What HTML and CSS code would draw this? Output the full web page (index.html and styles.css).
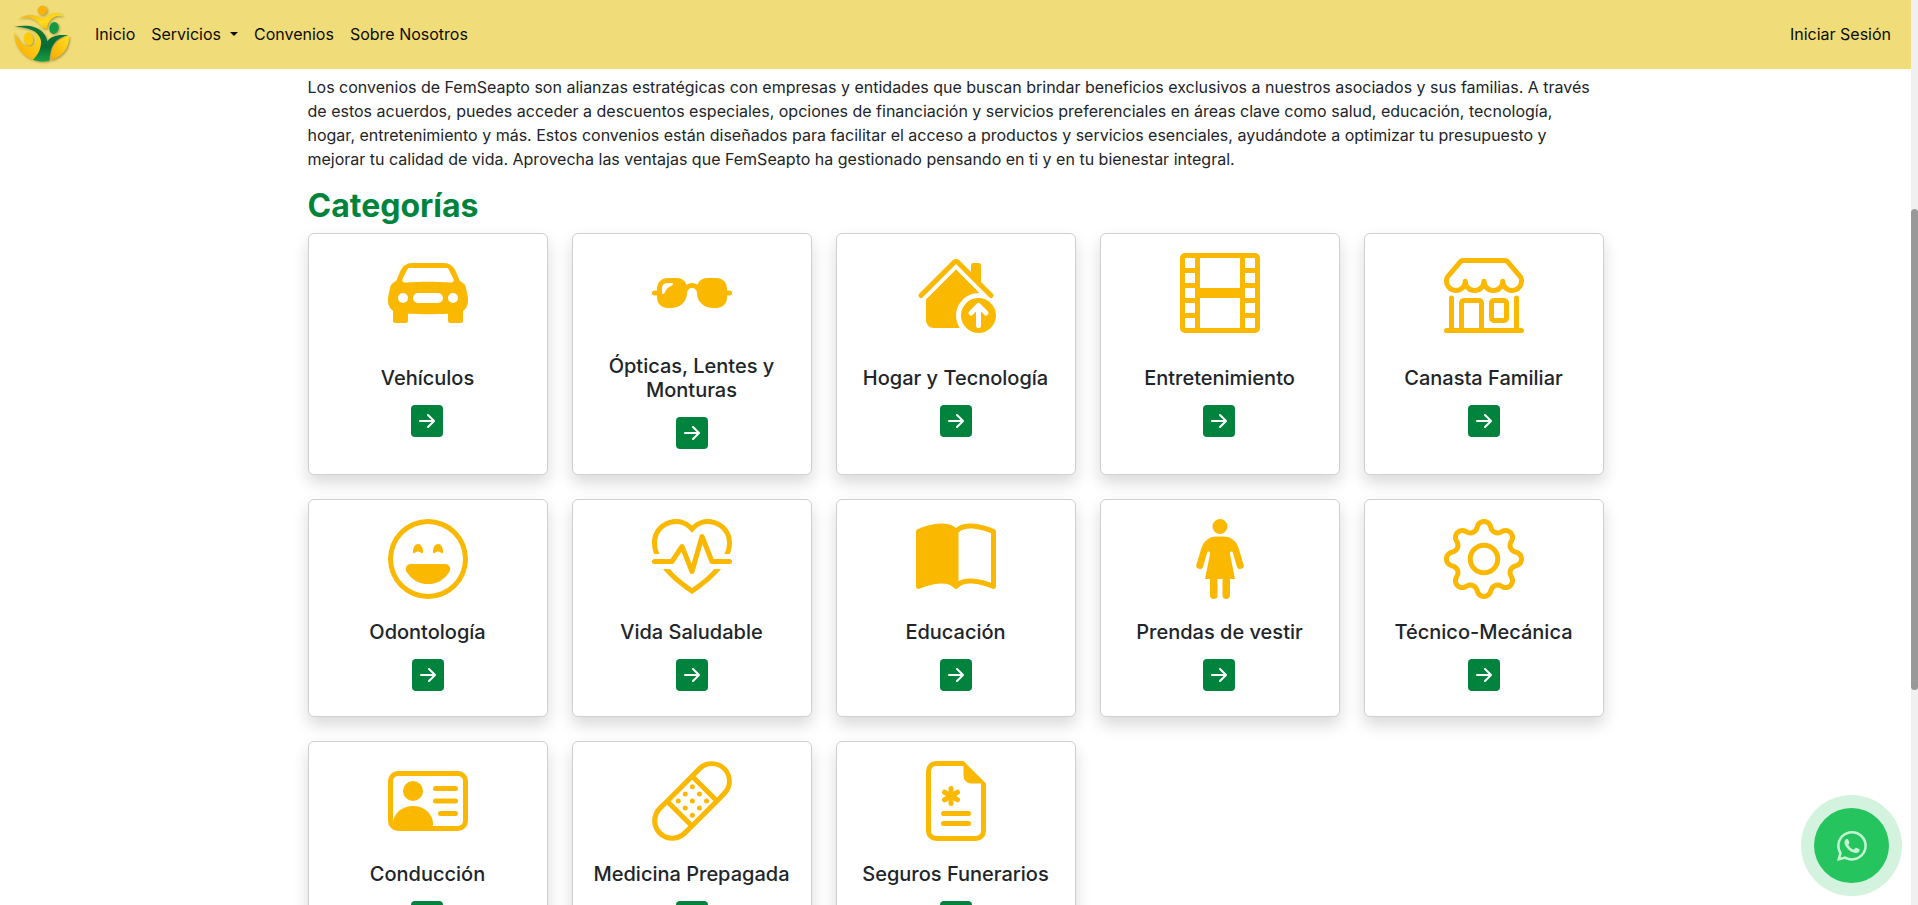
FILE: index.html
```html
<!DOCTYPE html>
<html lang="es">
<head>
<meta charset="utf-8">
<meta name="viewport" content="width=device-width, initial-scale=1">
<title>Convenios - FemSeapto</title>
<link rel="stylesheet" href="styles.css">
</head>
<body>
<svg class="sprite" aria-hidden="true">
  <symbol id="arrow" viewBox="0 0 16 16"><path d="M4 8a.5.5 0 0 1 .5-.5h5.793L8.146 5.354a.5.5 0 1 1 .708-.708l3 3a.5.5 0 0 1 0 .708l-3 3a.5.5 0 0 1-.708-.708L10.293 8.5H4.5A.5.5 0 0 1 4 8"/></symbol>
</svg>
<div class="page">
  <header class="navbar">
    <a class="brand" href="#" aria-label="FemSeapto">
      <svg class="logo" viewBox="36 12 177 180" aria-hidden="true">
        <defs>
          <linearGradient id="gold" x1="0" y1="0" x2="1" y2="1"><stop offset="0" stop-color="#f7a80c"/><stop offset=".55" stop-color="#ffdc1e"/><stop offset="1" stop-color="#f9ad05"/></linearGradient>
          <linearGradient id="sun" x1="1" y1="0" x2="0" y2="1"><stop offset="0" stop-color="#ffe01e"/><stop offset="1" stop-color="#f9a703"/></linearGradient>
          <linearGradient id="leaf" x1="0" y1="0" x2="0" y2="1"><stop offset="0" stop-color="#0b7a3a"/><stop offset=".6" stop-color="#0a6b33"/><stop offset="1" stop-color="#16a044"/></linearGradient>
        </defs>
        <circle cx="127" cy="31" r="14" fill="#f8b30b"/>
        <path fill="url(#gold)" d="M53 59C70 44 94 43 108 49C121 56 134 55 147 45C160 37 180 36 190 50C176 45 164 48 154 58C146 67 143 74 141 86L126 84C121 71 106 58 90 54C77 51 63 54 53 59Z"/>
        <ellipse cx="162" cy="84" rx="14" ry="18" fill="#129a45" transform="rotate(12 162 84)"/>
        <path fill="url(#sun)" d="M43 97C42 137 65 168 99 179C114 166 126 149 126 132C125 111 111 94 94 88C112 102 115 124 104 134C91 145 69 139 58 122C51 113 46 106 43 97Z"/>
        <ellipse cx="86" cy="117" rx="14" ry="20" fill="#ffcb08" transform="rotate(-10 86 117)"/>
        <path fill="url(#leaf)" d="M43 81C75 73 108 77 125 94C134 102 140 112 142 124C151 109 174 102 205 106C177 110 158 130 153 151C150 164 149 174 148 182C132 186 114 185 99 179C115 164 124 145 123 124C121 101 95 80 43 81Z"/>
        <path fill="url(#sun)" d="M207 109C181 113 160 132 155 155C153 165 152 174 152 181C187 171 208 145 207 109Z"/>
      </svg>
    </a>
    <nav class="nav">
      <a href="#">Inicio</a>
      <button type="button" class="toggle">Servicios</button>
      <a href="#">Convenios</a>
      <a href="#">Sobre Nosotros</a>
    </nav>
    <nav class="nav account"><a href="#">Iniciar Sesión</a></nav>
  </header>

  <main class="container">
    <p class="intro">Los convenios de FemSeapto son alianzas estratégicas con empresas y entidades que buscan brindar beneficios exclusivos a nuestros asociados y sus familias. A través de estos acuerdos, puedes acceder a descuentos especiales, opciones de financiación y servicios preferenciales en áreas clave como salud, educación, tecnología, hogar, entretenimiento y más. Estos convenios están diseñados para facilitar el acceso a productos y servicios esenciales, ayudándote a optimizar tu presupuesto y mejorar tu calidad de vida. Aprovecha las ventajas que FemSeapto ha gestionado pensando en ti y en tu bienestar integral.</p>
    <h2 class="heading">Categorías</h2>
    <div class="grid">
      <article class="card">
        <svg class="icon" viewBox="0 0 16 16" aria-hidden="true"><path fill-rule="evenodd" d="M2.52 3.515A2.5 2.5 0 0 1 4.82 2h6.362c1 0 1.904.596 2.298 1.515l.792 1.848c.075.175.21.319.38.404.5.25.855.715.965 1.262l.335 1.679q.05.242.049.49v.413c0 .814-.39 1.543-1 1.997V13.5a.5.5 0 0 1-.5.5h-2a.5.5 0 0 1-.5-.5v-1.338c-1.292.048-2.745.088-4 .088s-2.708-.04-4-.088V13.5a.5.5 0 0 1-.5.5h-2a.5.5 0 0 1-.5-.5v-1.892c-.61-.454-1-1.183-1-1.997v-.413a2.5 2.5 0 0 1 .049-.49l.335-1.68c.11-.546.465-1.012.964-1.261a.8.8 0 0 0 .381-.404zM3 10a1 1 0 1 0 0-2 1 1 0 0 0 0 2m10 0a1 1 0 1 0 0-2 1 1 0 0 0 0 2M6 8a1 1 0 0 0 0 2h4a1 1 0 1 0 0-2zM2.906 5.189a.51.51 0 0 0 .497.731c.91-.073 3.35-.17 4.597-.17s3.688.097 4.597.17a.51.51 0 0 0 .497-.731l-.956-1.913A.5.5 0 0 0 11.691 3H4.309a.5.5 0 0 0-.447.276z"/></svg>
        <div class="body"><h3 class="title">Vehículos</h3><a class="go" href="#" aria-label="Ver Vehículos"><svg><use href="#arrow"/></svg></a></div>
      </article>
      <article class="card">
        <svg class="icon" viewBox="0 0 16 16" aria-hidden="true"><path d="M3 5a2 2 0 0 0-2 2v.5H.5a.5.5 0 0 0 0 1H1V9a2 2 0 0 0 2 2h1a3 3 0 0 0 3-3 1 1 0 1 1 2 0 3 3 0 0 0 3 3h1a2 2 0 0 0 2-2v-.5h.5a.5.5 0 0 0 0-1H15V7a2 2 0 0 0-2-2h-2a2 2 0 0 0-1.888 1.338A2 2 0 0 0 8 6a2 2 0 0 0-1.112.338A2 2 0 0 0 5 5zm0 1h.941c.264 0 .348.356.112.474l-.457.228a2 2 0 0 0-.894.894l-.228.457C2.356 8.289 2 8.205 2 7.94V7a1 1 0 0 1 1-1"/></svg>
        <div class="body"><h3 class="title">Ópticas, Lentes y Monturas</h3><a class="go" href="#" aria-label="Ver Ópticas, Lentes y Monturas"><svg><use href="#arrow"/></svg></a></div>
      </article>
      <article class="card">
        <svg class="icon" viewBox="0 0 16 16" aria-hidden="true"><path d="M8.707 1.5a1 1 0 0 0-1.414 0L.646 8.146a.5.5 0 0 0 .708.708L8 2.207l6.646 6.647a.5.5 0 0 0 .708-.708L13 5.793V2.5a.5.5 0 0 0-.5-.5h-1a.5.5 0 0 0-.5.5v1.293z"/><path d="m8 3.293 4.712 4.712A4.5 4.5 0 0 0 8.758 15H3.5A1.5 1.5 0 0 1 2 13.5V9.293z"/><path d="M12.5 16a3.5 3.5 0 1 0 0-7 3.5 3.5 0 0 0 0 7m.354-5.854 1.5 1.5a.5.5 0 0 1-.708.708L13 11.707V14.5a.5.5 0 0 1-1 0v-2.793l-.646.647a.5.5 0 0 1-.708-.708l1.5-1.5a.5.5 0 0 1 .708 0"/></svg>
        <div class="body"><h3 class="title">Hogar y Tecnología</h3><a class="go" href="#" aria-label="Ver Hogar y Tecnología"><svg><use href="#arrow"/></svg></a></div>
      </article>
      <article class="card">
        <svg class="icon" viewBox="0 0 16 16" aria-hidden="true"><path fill-rule="evenodd" d="M0 1a1 1 0 0 1 1-1h14a1 1 0 0 1 1 1v14a1 1 0 0 1-1 1H1a1 1 0 0 1-1-1zm4 0v6h8V1zm8 8H4v6h8zM1 1v2h2V1zm2 3H1v2h2zM1 7v2h2V7zm2 3H1v2h2zm-2 3v2h2v-2zM15 1h-2v2h2zm-2 3v2h2V4zm2 3h-2v2h2zm-2 3v2h2v-2zm2 3h-2v2h2z"/></svg>
        <div class="body"><h3 class="title">Entretenimiento</h3><a class="go" href="#" aria-label="Ver Entretenimiento"><svg><use href="#arrow"/></svg></a></div>
      </article>
      <article class="card">
        <svg class="icon" viewBox="0 0 16 16" aria-hidden="true"><path d="M2.97 1.35A1 1 0 0 1 3.73 1h8.54a1 1 0 0 1 .76.35l2.609 3.044A1.5 1.5 0 0 1 16 5.37v.255a2.375 2.375 0 0 1-4.25 1.458A2.37 2.37 0 0 1 9.875 8 2.37 2.37 0 0 1 8 7.083 2.37 2.37 0 0 1 6.125 8a2.37 2.37 0 0 1-1.875-.917A2.375 2.375 0 0 1 0 5.625V5.37a1.5 1.5 0 0 1 .361-.976zm1.78 4.275a1.375 1.375 0 0 0 2.75 0 .5.5 0 0 1 1 0 1.375 1.375 0 0 0 2.75 0 .5.5 0 0 1 1 0 1.375 1.375 0 1 0 2.75 0V5.37a.5.5 0 0 0-.12-.325L12.27 2H3.73L1.12 5.045A.5.5 0 0 0 1 5.37v.255a1.375 1.375 0 0 0 2.75 0 .5.5 0 0 1 1 0M1.5 8.5A.5.5 0 0 1 2 9v6h1v-5a1 1 0 0 1 1-1h3a1 1 0 0 1 1 1v5h6V9a.5.5 0 0 1 1 0v6h.5a.5.5 0 0 1 0 1H.5a.5.5 0 0 1 0-1H1V9a.5.5 0 0 1 .5-.5M4 15h3v-5H4zm5-5a1 1 0 0 1 1-1h2a1 1 0 0 1 1 1v3a1 1 0 0 1-1 1h-2a1 1 0 0 1-1-1zm3 0h-2v3h2z"/></svg>
        <div class="body"><h3 class="title">Canasta Familiar</h3><a class="go" href="#" aria-label="Ver Canasta Familiar"><svg><use href="#arrow"/></svg></a></div>
      </article>
      <article class="card">
        <svg class="icon" viewBox="0 0 16 16" aria-hidden="true"><path d="M8 15A7 7 0 1 1 8 1a7 7 0 0 1 0 14m0 1A8 8 0 1 0 8 0a8 8 0 0 0 0 16"/><path d="M12.331 9.5a1 1 0 0 1 0 1A5 5 0 0 1 8 13a5 5 0 0 1-4.33-2.5A1 1 0 0 1 4.535 9h6.93a1 1 0 0 1 .866.5M7 6.5c0 .828-.448 0-1 0s-1 .828-1 0S5.448 5 6 5s1 .672 1 1.5m4 0c0 .828-.448 0-1 0s-1 .828-1 0S9.448 5 10 5s1 .672 1 1.5"/></svg>
        <div class="body"><h3 class="title">Odontología</h3><a class="go" href="#" aria-label="Ver Odontología"><svg><use href="#arrow"/></svg></a></div>
      </article>
      <article class="card">
        <svg class="icon" viewBox="0 0 16 16" aria-hidden="true"><path d="m8 2.748-.717-.737C5.6.281 2.514.878 1.4 3.053.918 3.995.78 5.323 1.508 7H.43c-2.128-5.697 4.165-8.83 7.394-5.857q.09.083.176.171a3 3 0 0 1 .176-.17c3.23-2.974 9.522.159 7.394 5.856h-1.078c.728-1.677.59-3.005.108-3.947C13.486.878 10.4.28 8.717 2.01zM2.212 10h1.315C4.593 11.183 6.05 12.458 8 13.795c1.949-1.337 3.407-2.612 4.473-3.795h1.315c-1.265 1.566-3.14 3.25-5.788 5-2.648-1.75-4.523-3.434-5.788-5"/><path d="M10.464 3.314a.5.5 0 0 0-.945.049L7.921 8.956 6.464 5.314a.5.5 0 0 0-.88-.091L3.732 8H.5a.5.5 0 0 0 0 1H4a.5.5 0 0 0 .416-.223l1.473-2.209 1.647 4.118a.5.5 0 0 0 .945-.049l1.598-5.593 1.457 3.642A.5.5 0 0 0 12 9h3.5a.5.5 0 0 0 0-1h-3.162z"/></svg>
        <div class="body"><h3 class="title">Vida Saludable</h3><a class="go" href="#" aria-label="Ver Vida Saludable"><svg><use href="#arrow"/></svg></a></div>
      </article>
      <article class="card">
        <svg class="icon" viewBox="0 0 16 16" aria-hidden="true"><path fill-rule="evenodd" d="M8.5 2.687c.654-.689 1.782-.886 3.112-.752 1.234.124 2.503.523 3.388.893v9.923c-.918-.35-2.107-.692-3.287-.81-1.094-.111-2.278-.039-3.213.492zM8 1.783C7.015.936 5.587.81 4.287.94c-1.514.153-3.042.672-3.994 1.105A.5.5 0 0 0 0 2.5v11a.5.5 0 0 0 .707.455c.882-.4 2.303-.881 3.68-1.02 1.409-.142 2.59.087 3.223.877a.5.5 0 0 0 .78 0c.633-.79 1.814-1.019 3.222-.877 1.378.139 2.8.62 3.681 1.02A.5.5 0 0 0 16 13.5v-11a.5.5 0 0 0-.293-.455c-.952-.433-2.48-.952-3.994-1.105C10.413.809 8.985.936 8 1.783"/></svg>
        <div class="body"><h3 class="title">Educación</h3><a class="go" href="#" aria-label="Ver Educación"><svg><use href="#arrow"/></svg></a></div>
      </article>
      <article class="card">
        <svg class="icon" viewBox="0 0 16 16" aria-hidden="true"><path d="M8 3a1.5 1.5 0 1 0 0-3 1.5 1.5 0 0 0 0 3m-.5 12.25V12h1v3.25a.75.75 0 0 0 1.5 0V12h1l-1-5v-.215a.285.285 0 0 1 .56-.078l.793 2.777a.711.711 0 1 0 1.364-.405l-1.065-3.461A3 3 0 0 0 8.784 3.5H7.216a3 3 0 0 0-2.868 2.118L3.283 9.079a.711.711 0 1 0 1.365.405l.793-2.777a.285.285 0 0 1 .56.078V7l-1 5h1v3.25a.75.75 0 0 0 1.5 0Z"/></svg>
        <div class="body"><h3 class="title">Prendas de vestir</h3><a class="go" href="#" aria-label="Ver Prendas de vestir"><svg><use href="#arrow"/></svg></a></div>
      </article>
      <article class="card">
        <svg class="icon" viewBox="0 0 16 16" aria-hidden="true"><path d="M8 4.754a3.246 3.246 0 1 0 0 6.492 3.246 3.246 0 0 0 0-6.492M5.754 8a2.246 2.246 0 1 1 4.492 0 2.246 2.246 0 0 1-4.492 0"/><path d="M9.796 1.343c-.527-1.79-3.065-1.79-3.592 0l-.094.319a.873.873 0 0 1-1.255.52l-.292-.16c-1.64-.892-3.433.902-2.54 2.541l.159.292a.873.873 0 0 1-.52 1.255l-.319.094c-1.79.527-1.79 3.065 0 3.592l.319.094a.873.873 0 0 1 .52 1.255l-.16.292c-.892 1.64.901 3.434 2.541 2.54l.292-.159a.873.873 0 0 1 1.255.52l.094.319c.527 1.79 3.065 1.79 3.592 0l.094-.319a.873.873 0 0 1 1.255-.52l.292.16c1.64.893 3.434-.902 2.54-2.541l-.159-.292a.873.873 0 0 1 .52-1.255l.319-.094c1.79-.527 1.79-3.065 0-3.592l-.319-.094a.873.873 0 0 1-.52-1.255l.16-.292c.893-1.64-.902-3.433-2.541-2.54l-.292.159a.873.873 0 0 1-1.255-.52zm-2.633.283c.246-.835 1.428-.835 1.674 0l.094.319a1.873 1.873 0 0 0 2.693 1.115l.291-.16c.764-.415 1.6.42 1.184 1.185l-.159.292a1.873 1.873 0 0 0 1.116 2.692l.318.094c.835.246.835 1.428 0 1.674l-.319.094a1.873 1.873 0 0 0-1.115 2.693l.16.291c.415.764-.42 1.6-1.185 1.184l-.291-.159a1.873 1.873 0 0 0-2.693 1.116l-.094.318c-.246.835-1.428.835-1.674 0l-.094-.319a1.873 1.873 0 0 0-2.692-1.115l-.292.16c-.764.415-1.6-.42-1.184-1.185l.159-.291A1.873 1.873 0 0 0 1.945 8.93l-.319-.094c-.835-.246-.835-1.428 0-1.674l.319-.094A1.873 1.873 0 0 0 3.06 4.377l-.16-.292c-.415-.764.42-1.6 1.185-1.184l.292.159a1.873 1.873 0 0 0 2.692-1.115z"/></svg>
        <div class="body"><h3 class="title">Técnico-Mecánica</h3><a class="go" href="#" aria-label="Ver Técnico-Mecánica"><svg><use href="#arrow"/></svg></a></div>
      </article>
      <article class="card">
        <svg class="icon" viewBox="0 0 16 16" aria-hidden="true"><path d="M5 8a2 2 0 1 0 0-4 2 2 0 0 0 0 4m4-2.5a.5.5 0 0 1 .5-.5h4a.5.5 0 0 1 0 1h-4a.5.5 0 0 1-.5-.5M9 8a.5.5 0 0 1 .5-.5h4a.5.5 0 0 1 0 1h-4A.5.5 0 0 1 9 8m1 2.5a.5.5 0 0 1 .5-.5h3a.5.5 0 0 1 0 1h-3a.5.5 0 0 1-.5-.5"/><path d="M2 2a2 2 0 0 0-2 2v8a2 2 0 0 0 2 2h12a2 2 0 0 0 2-2V4a2 2 0 0 0-2-2zM1 4a1 1 0 0 1 1-1h12a1 1 0 0 1 1 1v8a1 1 0 0 1-1 1H8.96q.04-.245.04-.5C9 10.567 7.21 9 5 9c-2.086 0-3.8 1.398-3.984 3.181A1 1 0 0 1 1 12z"/></svg>
        <div class="body"><h3 class="title">Conducción</h3><a class="go" href="#" aria-label="Ver Conducción"><svg><use href="#arrow"/></svg></a></div>
      </article>
      <article class="card">
        <svg class="icon" viewBox="0 0 16 16" aria-hidden="true"><path fill-rule="evenodd" d="M14.121 1.879a3 3 0 0 0-4.242 0L8.733 3.026l4.261 4.26 1.127-1.165a3 3 0 0 0 0-4.242M12.293 8 8.027 3.734 3.738 8.031 8 12.293zm-5.006 4.994L3.03 8.737 1.879 9.88a3 3 0 0 0 4.241 4.24l.006-.006 1.16-1.121ZM2.679 7.676l6.492-6.504a4 4 0 0 1 5.66 5.653l-1.477 1.529-5.006 5.006-1.523 1.472a4 4 0 0 1-5.653-5.66l.001-.002 1.505-1.492z"/><circle cx="8.07" cy="5.17" r=".5"/><circle cx="6.65" cy="6.59" r=".5"/><circle cx="9.48" cy="6.59" r=".5"/><circle cx="5.24" cy="8" r=".5"/><circle cx="8.07" cy="8" r=".5"/><circle cx="10.9" cy="8" r=".5"/><circle cx="6.65" cy="9.41" r=".5"/><circle cx="9.48" cy="9.41" r=".5"/><circle cx="8.07" cy="10.83" r=".5"/></svg>
        <div class="body"><h3 class="title">Medicina Prepagada</h3><a class="go" href="#" aria-label="Ver Medicina Prepagada"><svg><use href="#arrow"/></svg></a></div>
      </article>
      <article class="card">
        <svg class="icon" viewBox="0 0 16 16" aria-hidden="true"><path d="M7.5 5.5a.5.5 0 0 0-1 0v.634l-.549-.317a.5.5 0 1 0-.5.866L6 7l-.549.317a.5.5 0 1 0 .5.866l.549-.317V8.5a.5.5 0 1 0 1 0v-.634l.549.317a.5.5 0 1 0 .5-.866L8 7l.549-.317a.5.5 0 1 0-.5-.866l-.549.317zm-2 4.5a.5.5 0 0 0 0 1h5a.5.5 0 0 0 0-1zm0 2a.5.5 0 0 0 0 1h5a.5.5 0 0 0 0-1z"/><path d="M14 14V4.5L9.5 0H4a2 2 0 0 0-2 2v12a2 2 0 0 0 2 2h8a2 2 0 0 0 2-2M9.5 3A1.5 1.5 0 0 0 11 4.5h2V14a1 1 0 0 1-1 1H4a1 1 0 0 1-1-1V2a1 1 0 0 1 1-1h5.5z"/></svg>
        <div class="body"><h3 class="title">Seguros Funerarios</h3><a class="go" href="#" aria-label="Ver Seguros Funerarios"><svg><use href="#arrow"/></svg></a></div>
      </article>
    </div>
  </main>
</div>
<div class="scrollbar" aria-hidden="true"><div class="thumb"></div></div>
<a class="whatsapp" href="#" aria-label="WhatsApp">
  <svg viewBox="0 0 16 16" aria-hidden="true"><path d="M13.601 2.326A7.85 7.85 0 0 0 7.994 0C3.627 0 .068 3.558.064 7.926c0 1.399.366 2.76 1.057 3.965L0 16l4.204-1.102a7.9 7.9 0 0 0 3.79.965h.004c4.368 0 7.926-3.558 7.93-7.93A7.9 7.9 0 0 0 13.6 2.326zM7.994 14.521a6.6 6.6 0 0 1-3.356-.92l-.24-.144-2.494.654.666-2.433-.156-.251a6.56 6.56 0 0 1-1.007-3.505c0-3.626 2.957-6.584 6.591-6.584a6.56 6.56 0 0 1 4.66 1.931 6.56 6.56 0 0 1 1.928 4.66c-.004 3.639-2.961 6.592-6.592 6.592m3.615-4.934c-.197-.099-1.17-.578-1.353-.646-.182-.065-.315-.099-.445.099-.133.197-.513.646-.627.775-.114.133-.232.148-.43.05-.197-.1-.836-.308-1.592-.985-.59-.525-.985-1.175-1.103-1.372-.114-.198-.011-.304.088-.403.087-.088.197-.232.296-.346.1-.114.133-.198.198-.33.065-.134.034-.248-.015-.347-.05-.099-.445-1.076-.612-1.47-.16-.389-.323-.335-.445-.34-.114-.007-.247-.007-.38-.007a.73.73 0 0 0-.529.247c-.182.198-.691.677-.691 1.654s.71 1.916.81 2.049c.098.133 1.394 2.132 3.383 2.992.47.205.84.326 1.129.418.475.152.904.129 1.246.08.38-.058 1.171-.48 1.338-.943.164-.464.164-.86.114-.994-.049-.133-.182-.182-.38-.28"/></svg>
</a>
</body>
</html>
```
FILE: styles.css
```css
*, *::before, *::after { box-sizing: border-box; }

body {
  margin: 0;
  height: 100vh;
  overflow: hidden;
  display: grid;
  grid-template-columns: minmax(0, 1fr) 7px;
  background: #fff;
  color: #212529;
  font: 400 16px/24px Inter, "Liberation Sans", sans-serif;
}

.sprite { position: absolute; width: 0; height: 0; }

.page { min-width: 0; overflow: hidden; }

.navbar {
  display: flex;
  align-items: center;
  padding: 4px 12px 5px;
  background: #f0dc78;
}
.brand { display: block; margin-right: 16px; }
.logo {
  display: block;
  width: 59px;
  height: 60px;
  overflow: visible;
  filter: drop-shadow(1px 1px 1px rgba(90, 80, 30, .5));
}
.nav { display: flex; align-items: center; }
.nav a, .nav button {
  padding: 8px;
  border: 0;
  background: none;
  color: #0d0c06;
  font: inherit;
  text-decoration: none;
  cursor: pointer;
}
.account { margin-left: auto; }
.toggle::after {
  content: "";
  display: inline-block;
  margin-left: 9px;
  vertical-align: 4px;
  border-top: 4px solid;
  border-left: 4px solid transparent;
  border-right: 4px solid transparent;
}

.container { max-width: 1320px; margin: 0 auto; padding: 6px 12px 24px; }
.intro { margin: 0 0 16px; }
.heading {
  margin: 0 0 8px;
  color: #00843d;
  font-size: 32px;
  line-height: 38px;
  font-weight: 700;
}

.grid {
  display: grid;
  grid-template-columns: repeat(5, minmax(0, 1fr));
  gap: 24px;
}
.card {
  display: flex;
  flex-direction: column;
  align-items: center;
  padding: 19px 16px 25px;
  border: 1px solid #ced0d2;
  border-radius: 6px;
  background: #fff;
  box-shadow: 0 8px 16px rgba(0, 0, 0, .15);
}
.icon { width: 80px; height: 80px; fill: #fbb800; }
.body {
  flex: 1;
  display: flex;
  flex-direction: column;
  align-items: center;
  justify-content: center;
  gap: 15px;
  padding-top: 21px;
  text-align: center;
}
.title { margin: 0; font-size: 20px; line-height: 24px; font-weight: 500; }
.go {
  display: block;
  width: 32px;
  height: 32px;
  border-radius: 4px;
  background: #00843d;
  fill: #fff;
}
.go svg { display: block; width: 100%; height: 100%; }

.scrollbar { padding-top: 209px; background: #f0f0f0; }
.thumb { height: 481px; border-radius: 4px; background: #999; }

.whatsapp {
  position: fixed;
  right: 29px;
  bottom: 22px;
  display: grid;
  place-items: center;
  width: 75px;
  height: 75px;
  border-radius: 50%;
  background: #25c45e;
  box-shadow: 0 0 0 13px #d3f3de;
}
.whatsapp svg { width: 30px; height: 30px; fill: #c4f5d2; }
```
